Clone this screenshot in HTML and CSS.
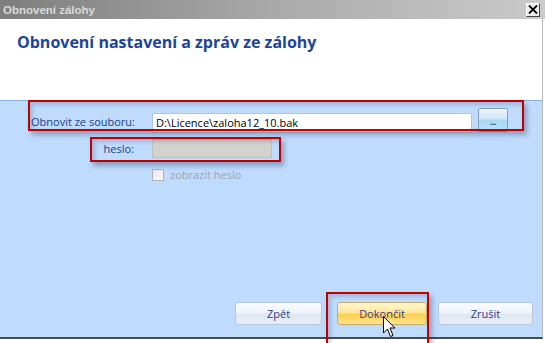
FILE: index.html
```html
<!DOCTYPE html>
<html lang="cs">
<head>
  <meta charset="UTF-8">
  <title>Obnovení zálohy</title>
  <link rel="stylesheet" href="styles.css">
</head>
<body>
  <div class="page">
    <div class="titlebar">
      <span class="title">Obnovení zálohy</span>
      <span class="close">
        <svg width="10" height="9" viewBox="0 0 10 9"><path d="M1 0.5 L9 8.5 M9 0.5 L1 8.5" stroke="#000" stroke-width="1.8"/></svg>
      </span>
    </div>
    <div class="panel">
      <div class="header">
        <h1>Obnovení nastavení a zpráv ze zálohy</h1>
      </div>
      <div class="content">
        <div class="row row-file">
          <div class="label">Obnovit ze souboru:</div>
          <div class="field">D:\Licence\zaloha12_10.bak</div>
          <div class="browse"><span class="dots">...</span></div>
        </div>
        <div class="row row-pass">
          <div class="label">heslo:</div>
          <div class="field field-off"></div>
        </div>
        <div class="row row-check">
          <span class="check"></span>
          <span class="check-label">zobrazit heslo</span>
        </div>

        <div class="buttons">
          <div class="btn btn-back">Zpět</div>
          <div class="btn btn-finish">Dokončit</div>
          <div class="btn btn-cancel">Zrušit</div>
        </div>

        <!-- red annotation frames -->
        <div class="mark mark-file"></div>
        <div class="mark mark-pass"></div>
        <div class="mark mark-finish"></div>

        <svg class="cursor" width="13" height="22" viewBox="0 0 13 22">
          <path d="M0.5 0.5 L0.5 17 L4.5 13 L7.5 20.5 L10 19.5 L7 12 L12 12 Z" fill="#fff" stroke="#000" stroke-width="1"/>
        </svg>
      </div>
    </div>
  </div>
</body>
</html>
```

FILE: styles.css
```css
body {
  margin: 0;
  background: #fff;
  font-family: "Open Sans", "DejaVu Sans", sans-serif;
}
.page {
  width: 545px;
  height: 343px;
  overflow: hidden;
}
.titlebar {
  height: 19px;
  display: flex;
  align-items: center;
  justify-content: space-between;
  padding: 0 5px 0 3px;
  background: linear-gradient(to right, #7e7e7e, #a9a9a9 50%, #cbcbcb);
}
.title {
  font-family: "Liberation Sans", Arial, sans-serif;
  font-weight: bold;
  font-size: 11.5px;
  color: #d9d9d9;
}
.close {
  width: 12px;
  height: 12px;
  display: flex;
  align-items: center;
  justify-content: center;
  background: #ececec;
  border: 1px solid;
  border-color: #fff #444 #444 #fff;
}
.panel {
  width: 542px;
  border-right: 1px solid #b8b8b8;
  border-bottom: 2px solid #4a4a4a;
}
.header {
  height: 81px;
  background: #fff;
}
.header h1 {
  margin: 0;
  padding: 12px 0 0 17px;
  font-size: 16px;
  font-weight: bold;
  color: #1d4597;
}
.content {
  position: relative;
  height: 236px;
  display: flex;
  flex-direction: column;
  background: #bfdbfe;
  border-top: 1px solid #8fb2e0;
  font-size: 11px;
}
.row {
  display: flex;
  align-items: flex-start;
}
.label {
  width: 134px;
  text-align: right;
  color: #20408e;
  white-space: nowrap;
}
.field {
  box-sizing: border-box;
  margin-left: 18px;
  background: #fff;
  border: 1px solid #b4c4d8;
  color: #000;
  padding-left: 3px;
}
.row-file {
  margin-top: 7px;
}
.row-file .label {
  box-sizing: border-box;
  padding-top: 6px;
  padding-left: 31px;
  text-align: left;
}
.row-file .field {
  width: 320px;
  height: 20px;
  line-height: 18px;
  margin-top: 5px;
}
.browse {
  box-sizing: border-box;
  width: 30px;
  height: 24px;
  margin-left: 6px;
  border: 1px solid #8aa0b8;
  border-radius: 2px;
  background: linear-gradient(#eef6fd, #cfe6f7 45%, #a9d7f3 50%, #b8e2f8);
  display: flex;
  justify-content: center;
  align-items: center;
}
.dots {
  font-size: 9px;
  font-weight: bold;
  color: #1d4f9c;
  letter-spacing: -0.5px;
  margin-top: 2px;
}
.row-pass {
  margin-top: 6px;
}
.row-pass .label {
  line-height: 19px;
}
.field-off {
  width: 120px;
  height: 19px;
  background: #d6d3ce;
  border-color: #c3c0bb;
}
.row-check {
  margin-top: 11px;
  padding-left: 152px;
  align-items: center;
}
.check {
  box-sizing: border-box;
  width: 12px;
  height: 12px;
  border: 1px solid #b2b2b2;
  background: linear-gradient(135deg, #e6e6e6, #fbfbfb);
}
.check-label {
  margin-left: 6px;
  color: #a0a4ab;
  line-height: 12px;
}
.buttons {
  margin-top: auto;
  margin-bottom: 12px;
  display: flex;
  padding-left: 235px;
}
.btn {
  box-sizing: border-box;
  height: 23px;
  line-height: 21px;
  text-align: center;
  border: 1px solid #b7c7dc;
  border-radius: 3px;
  color: #2a3f8c;
  background: linear-gradient(#fbfcfe, #eef3f9 45%, #dfe7f2 55%, #e8eef6);
}
.btn-back {
  width: 87px;
}
.btn-finish {
  width: 90px;
  margin-left: 15px;
  border-color: #c8ac6c;
  color: #3b3a86;
  background: linear-gradient(#fff6d2, #ffe69a 45%, #ffd04e 55%, #ffe38e);
}
.btn-cancel {
  width: 95px;
  margin-left: 11px;
}
.mark {
  position: absolute;
  box-sizing: border-box;
  border: 2px solid #c00000;
  box-shadow: 3px 4px 5px rgba(40, 50, 80, 0.35), inset 3px 3px 4px rgba(40, 50, 80, 0.2);
}
.mark-file {
  left: 28px;
  top: -1px;
  width: 496px;
  height: 31px;
}
.mark-pass {
  left: 90px;
  top: 36px;
  width: 191px;
  height: 25px;
}
.mark-finish {
  left: 326px;
  top: 191px;
  width: 103px;
  height: 70px;
}
.cursor {
  position: absolute;
  left: 383px;
  top: 215px;
}
```
